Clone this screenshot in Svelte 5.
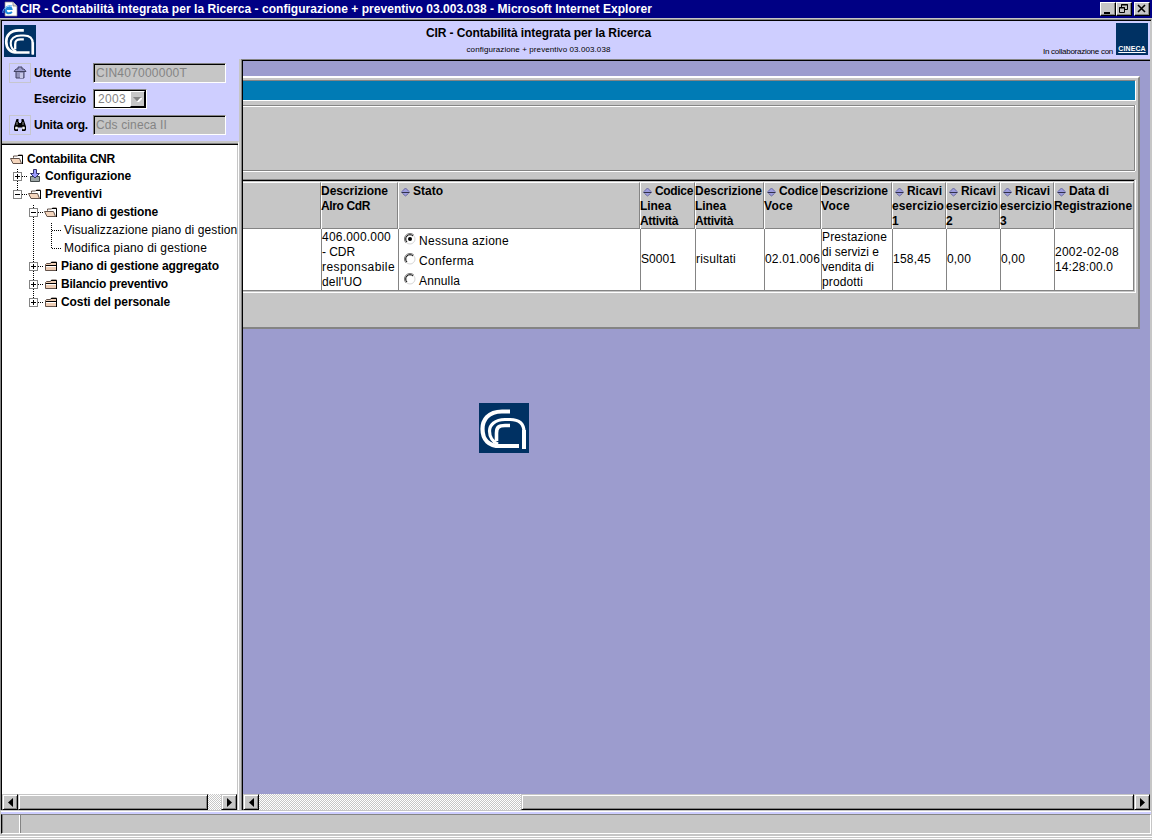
<script>
  function fit(node, width) {
    const natural = node.getBoundingClientRect().width;
    node.style.letterSpacing = (width - natural) / node.textContent.length + 'px';
  }

  const tree = [
    { t: 'Configurazione', x: 43, w: 86, box: 11, plus: true, icon: 'load', rails: [[15, 2, 18]] },
    { t: 'Preventivi', x: 43, w: 57, box: 11, icon: 'open', rails: [[15, 0, 9]] },
    { t: 'Piano di gestione', x: 59, w: 97, box: 27, icon: 'open', rails: [[31, 2, 18]] },
    { t: 'Visualizzazione piano di gestione', x: 62, w: 180, leaf: true, rails: [[31, 0, 18], [49, 2, 18]] },
    { t: 'Modifica piano di gestione', x: 62, w: 143, leaf: true, rails: [[31, 0, 18], [49, 0, 9]] },
    { t: 'Piano di gestione aggregato', x: 59, w: 158, box: 27, plus: true, icon: 'closed', rails: [[31, 0, 18]] },
    { t: 'Bilancio preventivo', x: 59, w: 107, box: 27, plus: true, icon: 'closed', rails: [[31, 0, 18]] },
    { t: 'Costi del personale', x: 59, w: 109, box: 27, plus: true, icon: 'closed', rails: [[31, 0, 9]] }
  ];

  const columns = [
    { head: [], body: [] },
    { head: [['Descrizione', 67], ['Alro CdR', 49]], body: [['406.000.000', 69], ['- CDR', 33], ['responsabile', 73], ["dell'UO", 40]] },
    { sort: true, head: [['Stato', 30]], radios: [['Nessuna azione', 90], ['Conferma', 55], ['Annulla', 41]] },
    { sort: true, head: [['Codice', 38], ['Linea', 31], ['Attività', 38]], body: [['S0001', 35]] },
    { head: [['Descrizione', 67], ['Linea', 31], ['Attività', 38]], body: [['risultati', 40]] },
    { sort: true, head: [['Codice', 39], ['Voce', 29]], body: [['02.01.006', 55]] },
    { head: [['Descrizione', 67], ['Voce', 29]], body: [['Prestazione', 65], ['di servizi e', 57], ['vendita di', 52], ['prodotti', 41]] },
    { sort: true, head: [['Ricavi', 35], ['esercizio', 52], ['1', 6]], body: [['158,45', 38]] },
    { sort: true, head: [['Ricavi', 35], ['esercizio', 52], ['2', 7]], body: [['0,00', 24]] },
    { sort: true, head: [['Ricavi', 35], ['esercizio', 52], ['3', 7]], body: [['0,00', 24]] },
    { sort: true, head: [['Data di', 40], ['Registrazione', 78]], body: [['2002-02-08', 64], ['14:28:00.0', 58]] }
  ];
</script>

{#snippet cnr(size)}
  <svg class="cnr" width={size} height={size} viewBox="0 0 50 50">
    <rect width="50" height="50" fill="#003163" />
    <g fill="none" stroke="#fff">
      <path d="M31 8.500H23C9 8.500 3.500 17 3.500 26C3.500 37 10 43 21 43H40" stroke-width="4.200" />
      <path d="M45 46V29C45 20 40 16.500 31 16.500H26C16 16.500 10.500 22 10.500 28C10.500 34 14 39 19 41" stroke-width="3.200" />
      <path d="M45 46V27" stroke-width="4" />
      <path d="M17.500 38V30C17.500 24 20 22.500 26 22.500H31" stroke-width="3.600" />
    </g>
  </svg>
{/snippet}

{#snippet folder(open)}
  {#if open}
    <path d="M3.500 4.500V3h4l1-1h4v8.500h-9z" fill="#fff" stroke="#63524a" />
    <path d="M0.500 5.500h9l2 5H3z" fill="#f5d6bd" stroke="#63524a" />
    <path d="M8 2.500h4.500V11" fill="none" stroke="#000" />
  {:else}
    <path d="M1.500 4.500l1-1h4l1-1.500h5v8.500h-11z" fill="#efceb5" stroke="#63524a" />
    <path d="M2 5.500h10M7 2.500h5.500V11" fill="none" stroke="#000" /><path d="M2 6.500h10" stroke="#fff" />
  {/if}
{/snippet}

{#snippet arrow(right)}
  <span class="btn"><svg width="5" height="9" viewBox="0 0 5 9"><path d={right ? 'M0 0v9L5 4.500z' : 'M5 0v9L0 4.500z'} /></svg></span>
{/snippet}

<div class="window">
  <div class="title">
    <svg width="16" height="16" viewBox="0 0 16 16">
      <path d="M3 1h8l4 4v10H3z" fill="#fff" stroke="#888" stroke-width=".7" /><path d="M11 1v4h4" fill="#ddd" stroke="#777" stroke-width=".7" />
      <path d="M10 11C6 14 3 11 4 8.500s5-3 5.500-.5H4" fill="none" stroke="#218cde" stroke-width="2" /><path d="M1 12C0 8 6 3 10 5" fill="none" stroke="#5ab5ff" />
    </svg>
    <b><span use:fit={632}>CIR - Contabilità integrata per la Ricerca - configurazione + preventivo 03.003.038 - Microsoft Internet Explorer</span></b>
    <div class="controls">
      <span class="ctl"><svg width="14" height="12"><path d="M3 9h6v2H3z" /></svg></span>
      <span class="ctl"><svg width="14" height="12"><path d="M4.500 5V1.500h6v5H8M4 2h7M2 5h6M2.500 4.500h5v5h-5z" fill="none" stroke="#000" /></svg></span>
      <span class="ctl gap"><svg width="14" height="12"><path d="M3 2l7 7M10 2l-7 7" stroke="#000" stroke-width="1.600" /></svg></span>
    </div>
  </div>

  <div class="client">
    <div class="header">
      {@render cnr(32)}
      <div class="heading">
        <b><span use:fit={225}>CIR - Contabilità integrata per la Ricerca</span></b>
        <small><span use:fit={144}>configurazione + preventivo 03.003.038</span></small>
      </div>
      <div class="partner"><span use:fit={70}>In collaborazione con</span></div>
      <div class="cineca"><b>CINECA</b></div>
    </div>

    <div class="frames">
      <div class="left">
        <div class="form">
          <i class="tool"><svg width="16" height="14" viewBox="0 0 16 14"><path d="M2 5.500L4 3h2V1h4v2h2l2 2.500z" fill="#9c9cce" stroke="#424263" /><path d="M4 6v6h8V6" fill="#9494bd" stroke="#424263" /><path d="M8 7h3v5H8z" fill="#c6c6e7" /></svg></i>
          <b><span use:fit={37}>Utente</span></b>
          <div class="field"><span use:fit={91}>CIN407000000T</span></div>
          <i></i>
          <b><span use:fit={52}>Esercizio</span></b>
          <div class="select"><span use:fit={28}>2003</span><em><svg width="9" height="5"><path d="M1 1h9L5 6z" fill="#fff" /><path d="M0 0h8L4 4.500z" fill="#848484" /></svg></em></div>
          <i class="tool"><svg width="16" height="14" viewBox="0 0 16 14"><path d="M4.500 1h2v3h.5v1h2V4h.5V1h2l2.500 7.500V12l-1 1h-3V9.500h-4V13h-3l-1-1V8.500z" /><path d="M3.500 9h2v2h-2zM10.500 9h2v2h-2zM5 4v3M11 4v3" fill="#fff" stroke="#cecece" stroke-width=".7" /></svg></i>
          <b><span use:fit={54}>Unita org.</span></b>
          <div class="field"><span use:fit={71}>Cds cineca II</span></div>
        </div>
        <div class="treeframe">
          <div class="tree">
            <div class="row root">
              <svg width="25" height="18"><g transform="translate(8,3)">{@render folder(true)}</g></svg>
              <b><span use:fit={88}>Contabilita CNR</span></b>
            </div>
            {#each tree as r}
              <div class="row">
                <svg width={r.x} height="18">
                  {#each r.rails as [x, a, b]}
                    <path d="M{x + 0.5} {a}V{b}" stroke="#000" stroke-dasharray="1 1" />
                  {/each}
                  {#if r.leaf}
                    <path d="M50 9.500h9" stroke="#000" stroke-dasharray="1 1" />
                  {:else}
                    <path d="M{r.box + 9} 9.500h6" stroke="#000" stroke-dasharray="1 1" />
                    <rect x={r.box + 0.5} y="5.500" width="8" height="8" fill="#fff" stroke="#848484" />
                    <path d="M{r.box + 2} 9.500h5" stroke="#000" />
                    {#if r.plus}<path d="M{r.box + 4.5} 7v5" stroke="#000" />{/if}
                    <g transform="translate({r.box + 15},3)">
                      {#if r.icon === 'load'}
                        <g transform="translate(1,-1)"><path d="M1.500 7.500h9v5h-9z" fill="#9ca5a5" stroke="#424a4a" /><path d="M4.500 .5h3v4h3L6 9 1.500 4.500h3z" fill="#9c9cff" stroke="#31316b" /></g>
                      {:else}
                        {@render folder(r.icon === 'open')}
                      {/if}
                    </g>
                  {/if}
                </svg>
                {#if r.leaf}<span use:fit={r.w}>{r.t}</span>{:else}<b><span use:fit={r.w}>{r.t}</span></b>{/if}
              </div>
            {/each}
          </div>
          <div class="scroll">
            {@render arrow(false)}<span class="thumb wide"></span><span class="track"></span>{@render arrow(true)}
          </div>
        </div>
      </div>

      <div class="main">
        <div class="canvas">
          <div class="panel">
            <div class="band"></div>
            <div class="group"></div>
            <div class="table">
              <div class="cells head">
                {#each columns as c}
                  <div class="th">
                    {#each c.head as [t, w], i}
                      <div class="line">
                        {#if c.sort && i === 0}<svg width="15" height="12" viewBox="0 0 15 12"><path d="M3.500 6.500v-1L7 2h1l3.500 3.500v1L8 10H7z" fill="#9c9cde" /><path d="M4 5.500L7.500 2 11 5.500M4.500 7.500l3 2.500 3-2.500" fill="none" stroke="#63638c" stroke-width=".8" /><path d="M3.500 6.500h8" stroke="#31314a" /></svg>{/if}<span use:fit={w}>{t}</span>
                      </div>
                    {/each}
                  </div>
                {/each}
              </div>
              <div class="cells body">
                {#each columns as c}
                  <div class="td">
                    {#if c.radios}
                      {#each c.radios as [t, w], i}
                        <div class="radio">
                          <svg width="12" height="12" viewBox="0 0 12 12"><circle cx="6" cy="6" r="5" fill="#fff" stroke="#d6d6d6" /><path d="M2.100 9.900A5.300 5.300 0 0 1 9.900 2.100" fill="none" stroke="#777" /><path d="M3 9A4.200 4.200 0 0 1 9 3" fill="none" stroke="#000" />{#if i === 0}<circle cx="6" cy="6" r="2" />{/if}</svg>
                          <span use:fit={w}>{t}</span>
                        </div>
                      {/each}
                    {:else}
                      {#each c.body as [t, w]}<div class="line"><span use:fit={w}>{t}</span></div>{/each}
                    {/if}
                  </div>
                {/each}
              </div>
            </div>
          </div>
          <div class="splash">{@render cnr(50)}</div>
        </div>
        <div class="scroll">
          {@render arrow(false)}<span class="track long"></span><span class="thumb"></span>{@render arrow(true)}
        </div>
      </div>
    </div>
  </div>

  <div class="status"><span></span><span></span></div>
  <div class="edge"></div>
</div>

<style>
  :global(body) { margin: 0; overflow: hidden; }
  .window, .window * { box-sizing: border-box; }
  .window { width: 1152px; height: 840px; display: flex; flex-direction: column; background: #c6c6c6; font: 12px/15px "Liberation Sans", Arial, sans-serif; color: #000; white-space: nowrap; }
  svg { display: block; flex: none; }
  b { font-weight: bold; }
  .title { height: 18px; flex: none; background: #000084; color: #fff; display: flex; align-items: center; padding: 0 2px; gap: 2px; }
  .controls { margin-left: auto; display: flex; }
  .ctl { width: 16px; height: 14px; background: #c6c6c6; border: 1px solid; border-color: #fff #000 #000 #fff; box-shadow: inset -1px -1px #848484; overflow: hidden; }
  .ctl.gap { margin-left: 2px; }

  .client { margin-top: 1px; height: 791px; flex: none; border-top: 1px solid #848484; border-left: 1px solid #848484; border-right: 1px solid #c6c6c6; display: flex; flex-direction: column; box-shadow: inset 1px 1px #000, inset -1px 0 #c6c6c6; padding: 1px 1px 0 1px; background: #ceceff; }
  .header { height: 38px; flex: none; display: flex; }
  .header > :global(.cnr) { margin: 4px 0 0 2px; }
  .heading { flex: 1; display: flex; flex-direction: column; align-items: center; padding: 5px 2px 0 0; }
  .heading b { height: 17px; }
  .heading small { font-size: 8px; line-height: 14px; }
  .partner { font-size: 8px; line-height: 14px; padding-top: 24px; width: 73px; }
  .cineca { width: 32px; height: 32px; margin: 2px 2px 0 0; background: #003163; color: #fff; display: flex; align-items: flex-end; justify-content: center; }
  .cineca b { font-size: 7px; line-height: 9px; letter-spacing: .1px; text-decoration: underline; text-decoration-thickness: 1px; padding-bottom: 2px; }

  .frames { flex: 1; display: flex; min-height: 0; }
  .left { width: 237px; display: flex; flex-direction: column; }
  .form { height: 82px; flex: none; display: grid; grid-template-columns: 22px 59px 1fr; grid-template-rows: 26px 26px 26px; align-items: center; padding: 1px 0 0 7px; column-gap: 3px; background: #ceceff; }
  .form b { text-align: left; padding-top: 1px; }
  .tool { width: 22px; height: 20px; border: 1px solid #c6c6ce; display: flex; align-items: center; justify-content: center; padding-right: 1px; }
  .field { width: 133px; height: 20px; line-height: 19px; border: 1px solid; border-color: #848484 #fff #fff #848484; box-shadow: inset 1px 1px #000; background: #c6c6c6; color: #848484; padding-left: 2px; margin-left: -3px; }
  .select { width: 54px; height: 20px; margin-left: -3px; border: 1px solid; border-color: #848484 #fff #fff #848484; box-shadow: inset 1px 1px #000, inset -1px -1px #000; background: #fff; color: #848484; display: flex; align-items: center; justify-content: space-between; padding: 1px 1px 1px 4px; }
  .select span { padding-top: 1px; }
  .select em { width: 15px; height: 16px; background: #c6c6c6; border: 1px solid; border-color: #fff #000 #000 #fff; display: flex; align-items: center; justify-content: center; }
  .treeframe { flex: 1; width: 237px; border-top: 2px solid #c6c6c6; box-shadow: inset 0 1px #848484, inset 0 2px #000; border-right: 1px solid #fff; display: flex; flex-direction: column; padding-top: 2px; min-height: 0; }
  .tree { flex: 1; background: #fff; padding-top: 6px; overflow: hidden; border-right: 1px solid #c6c6c6; }
  .row { height: 18px; display: flex; align-items: center; line-height: 18px; }
  .row.root { height: 16px; }
  .scroll { height: 16px; flex: none; display: flex; }
  .btn, .thumb { border: 1px solid; border-color: #c6c6c6 #000 #000 #c6c6c6; background: #c6c6c6; box-shadow: inset 1px 1px #fff, inset -1px -1px #848484; }
  .btn { width: 16px; flex: none; display: flex; align-items: center; justify-content: center; }
  .track { width: 13px; background: repeating-conic-gradient(#fff 0 25%, #c6c6c6 0 50%) 0 0 / 2px 2px; }
  .track.long { width: 262px; }
  .thumb { flex: 1; }
  .left .scroll { border-right: 1px solid #c6c6c6; }

  .main { flex: 1; min-width: 0; border-left: 2px solid #c6c6c6; box-shadow: inset 1px 1px #848484, inset 2px 2px #000; padding: 2px 0 0 2px; display: flex; flex-direction: column; }
  .canvas { flex: 1; background: #9c9cce; padding-top: 15px; }
  .panel { width: 897px; height: 253px; background: #c6c6c6; border-top: 2px solid #fff; border-right: 2px solid #848484; border-bottom: 2px solid #848484; padding-top: 2px; }
  .band { width: 893px; height: 21px; background: #007bb5; border-top: 1px solid #848484; border-right: 1px solid #fff; border-bottom: 1px solid #fff; }
  .group { width: 892px; height: 66px; margin-top: 4px; border: 1px solid #848484; border-left: 0; box-shadow: 0 1px #fff, 1px 0 #fff, inset 0 1px #fff; }
  .table { width: 893px; margin-top: 8px; padding-right: 1px; border-top: 1px solid #848484; border-right: 1px solid #fff; border-bottom: 1px solid #fff; height: 114px; padding-bottom: 1px; }
  .cells { display: grid; grid-template-columns: 78px 77px 242px 55px 69px 57px 71px 54px 54px 54px 80px; }
  .head { border-top: 1px solid #000; padding-top: 1px; height: 49px; border-bottom: 1px solid #848484; font-weight: bold; }
  .th { border-top: 1px solid #fff; border-left: 1px solid #fff; border-right: 1px solid #848484; padding-top: 1px; }
  .th:first-child, .td:first-child { border-left: 0; }
  .head .line { display: flex; align-items: center; margin-left: -1px; }
  .body { height: 62px; background: #fff; border-bottom: 1px solid #848484; }
  .td { border-left: 1px solid #848484; display: flex; flex-direction: column; justify-content: center; }
  .body .td:last-child { border-right: 1px solid #848484; }
  .radio { height: 20px; display: flex; gap: 3px; padding-left: 5px; align-items: flex-start; }
  .radio svg { margin-top: 3px; }
  .radio span { line-height: 22px; }
  .splash { margin: 74px 0 0 236px; width: 50px; }

  .status { margin: 4px 1px 0 1px; height: 20px; border-top: 1px solid #848484; border-left: 1px solid #000; border-right: 1px solid #fff; border-bottom: 1px solid #fff; display: flex; box-shadow: 0 -2px #ceceff, 0 -3px #fff; flex: none; }
  .status span:first-child { width: 18px; border-right: 1px solid #fff; border-left: 1px solid #848484; }
  .status span:last-child { flex: 1; border-left: 1px solid #848484; }
  .edge { margin-top: 2px; height: 3px; border-top: 1px solid #fff; border-bottom: 1px solid #fff; }
</style>
